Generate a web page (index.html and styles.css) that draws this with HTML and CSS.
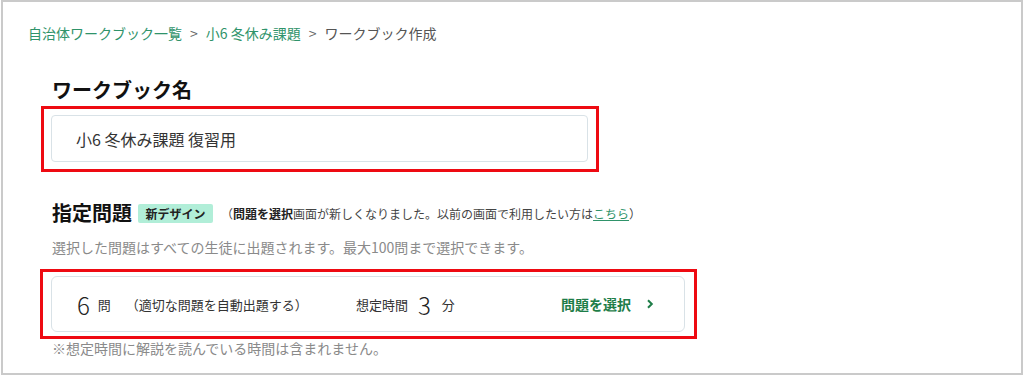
FILE: index.html
```html
<!DOCTYPE html>
<html lang="ja">
<head>
    <meta charset="UTF-8">
    <meta name="viewport" content="width=device-width, initial-scale=1.0">
    <title>ワークブック作成</title>
    <link rel="stylesheet" href="styles.css">
</head>
<body>
    <div class="frame">
        <nav class="breadcrumb">
            <a href="#">自治体ワークブック一覧</a>
            <span class="sep">&gt;</span>
            <a href="#">小6 冬休み課題</a>
            <span class="sep">&gt;</span>
            <span class="current">ワークブック作成</span>
        </nav>

        <main class="form">
            <section class="field">
                <h2 class="field-title">ワークブック名</h2>
                <div class="mark mark-name">
                    <input class="text-input" type="text" name="workbook-name" value="小6 冬休み課題 復習用">
                </div>
            </section>

            <section class="field field-questions">
                <div class="field-head">
                    <h2 class="field-title">指定問題</h2>
                    <span class="badge">新デザイン</span>
                    <p class="notice">（<b>問題を選択</b>画面が新しくなりました。以前の画面で利用したい方は<a href="#">こちら</a>）</p>
                </div>
                <p class="desc">選択した問題はすべての生徒に出題されます。最大100問まで選択できます。</p>
                <div class="mark mark-questions">
                    <div class="question-card">
                        <span class="big-num">6</span>
                        <span class="unit">問</span>
                        <span class="auto">（適切な問題を自動出題する）</span>
                        <span class="time-label">想定時間</span>
                        <span class="big-num big-num-time">3</span>
                        <span class="unit unit-time">分</span>
                        <a class="select-btn" href="#">問題を選択
                            <svg class="chevron" width="8" height="10" viewBox="0 0 8 10"><path d="M2 1.2 L5.8 5 L2 8.8" fill="none" stroke="#1e7d48" stroke-width="2"/></svg>
                        </a>
                    </div>
                </div>
                <p class="note">※想定時間に解説を読んでいる時間は含まれません。</p>
            </section>
        </main>
    </div>
</body>
</html>
```

FILE: styles.css
```css
body {
    margin: 0;
    font-family: "Noto Sans CJK JP", "Noto Sans", sans-serif;
    color: #222;
    background-color: #fff;
}
.frame {
    margin: 0 1px;
    height: 375px;
    box-sizing: border-box;
    border: 2px solid #cacaca;
}
.breadcrumb {
    padding: 21px 0 0 25px;
    font-size: 14px;
    line-height: 20px;
    display: flex;
    align-items: center;
}
.breadcrumb a {
    color: #2f936a;
    text-decoration: none;
}
.breadcrumb .sep {
    color: #666;
    margin: 0 8px;
}
.breadcrumb .current {
    color: #555;
}
.form {
    padding-left: 37px;
}
.field-title {
    margin: 0;
    font-size: 20px;
    line-height: 28px;
    font-weight: bold;
    color: #111;
}
.field > .field-title {
    margin-top: 33px;
    padding-left: 12px;
}
.mark {
    border: 3px solid #ee0a12;
    display: inline-block;
}
.mark-name {
    margin: 2px 0 0 1px;
    padding: 6px 8px 7px 7px;
}
.text-input {
    display: block;
    width: 537px;
    height: 47px;
    box-sizing: border-box;
    border: 1px solid #d9e2e7;
    border-radius: 4px;
    padding: 0 0 0 24px;
    font-family: inherit;
    font-size: 16px;
    color: #333;
    outline: none;
}
.field-questions {
    margin-top: 27px;
}
.field-head {
    display: flex;
    align-items: center;
    height: 28px;
    padding-left: 12px;
}
.badge {
    margin-left: 6px;
    width: 75px;
    height: 19px;
    box-sizing: border-box;
    background-color: #b1eed8;
    border-radius: 2px;
    font-size: 12px;
    font-weight: bold;
    line-height: 19px;
    text-align: center;
    color: #222;
}
.notice {
    margin: 0 0 0 8px;
    font-size: 12px;
    color: #444;
}
.notice b {
    color: #222;
}
.notice a {
    color: #2f936a;
}
.desc {
    margin: 10px 0 0;
    padding-left: 12px;
    font-size: 14px;
    line-height: 20px;
    color: #8a8a8a;
}
.mark-questions {
    margin-top: 12px;
    padding: 4px 9px 4px 8px;
}
.question-card {
    width: 634px;
    height: 56px;
    box-sizing: border-box;
    border: 1px solid #d9e2e7;
    border-radius: 6px;
    display: flex;
    align-items: center;
    padding: 0 30px 0 25px;
    font-size: 13px;
    color: #333;
}
.big-num {
    font-size: 24px;
    font-weight: 300;
    color: #222;
}
.unit {
    margin-left: 8px;
}
.auto {
    margin-left: 15px;
}
.time-label {
    margin-left: 48px;
}
.big-num-time {
    margin-left: 10px;
}
.unit-time {
    margin-left: 11px;
}
.select-btn {
    margin-left: auto;
    display: flex;
    align-items: center;
    font-size: 14px;
    font-weight: bold;
    color: #1e7d48;
    text-decoration: none;
}
.chevron {
    margin-left: 15px;
}
.note {
    margin: 0;
    padding-left: 12px;
    font-size: 14px;
    line-height: 18px;
    color: #8a8a8a;
}
```
